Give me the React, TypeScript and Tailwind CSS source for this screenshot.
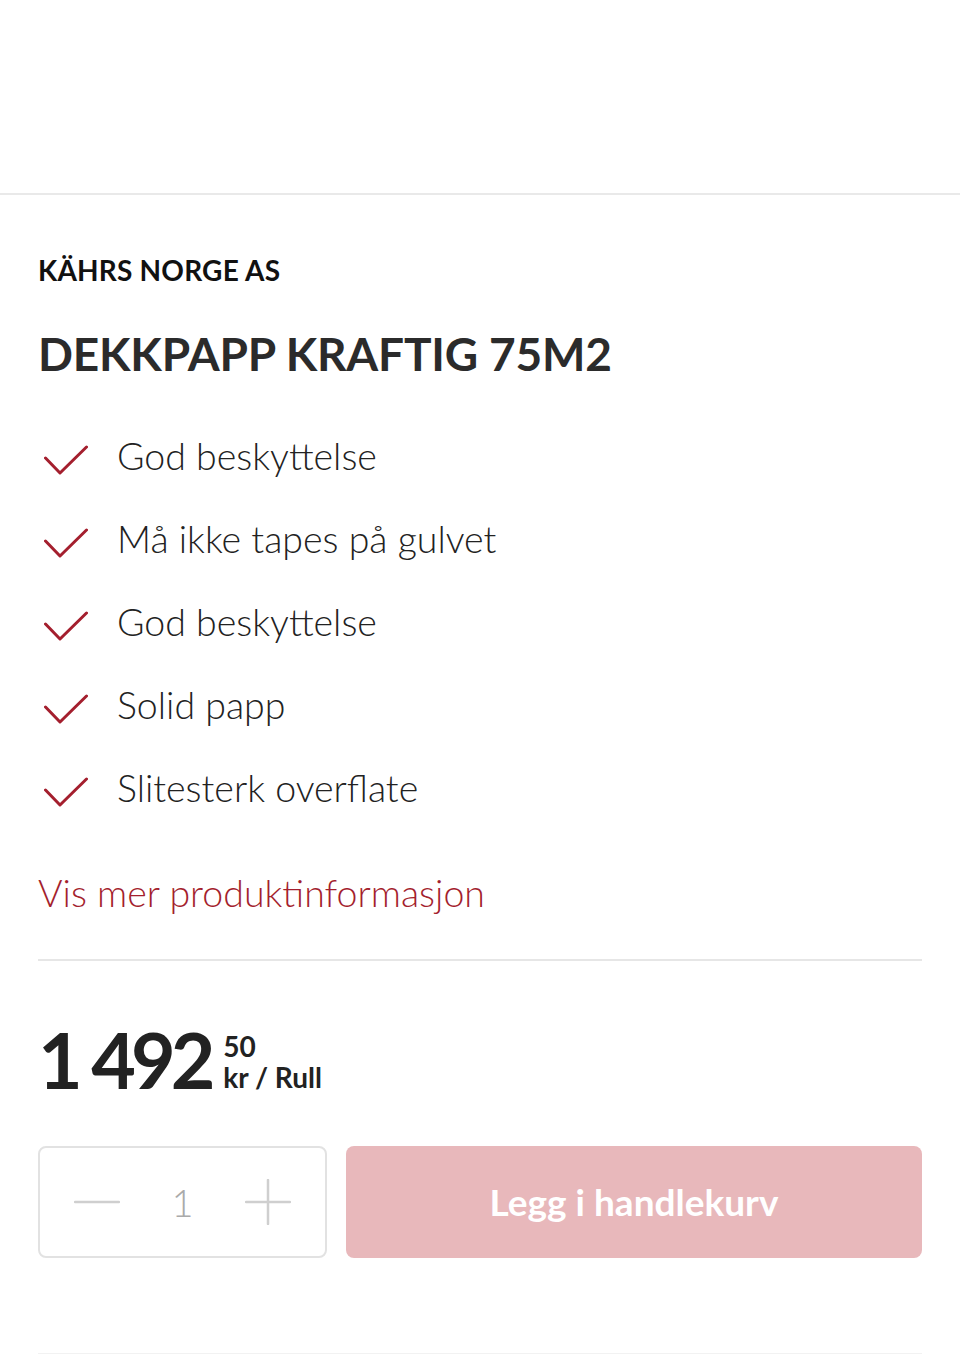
const features = [
  'God beskyttelse',
  'Må ikke tapes på gulvet',
  'God beskyttelse',
  'Solid papp',
  'Slitesterk overflate',
];

function Check() {
  return (
    <svg width="44" height="30" viewBox="0 0 44 30" fill="none" className="mt-[31px] shrink-0">
      <path d="M1.5 13 L16 28 L42.5 2" stroke="#a41f2e" strokeWidth="3" strokeLinecap="round" strokeLinejoin="round" />
    </svg>
  );
}

function Stepper({ plus }: { plus?: boolean }) {
  return (
    <svg width="46" height="46" viewBox="0 0 46 46" fill="none">
      <path d="M1 23 H45" stroke="#cfcfcf" strokeWidth="2.5" strokeLinecap="round" />
      {plus && <path d="M23 1 V45" stroke="#cfcfcf" strokeWidth="2.5" strokeLinecap="round" />}
    </svg>
  );
}

export default function App() {
  return (
    <div className="w-[960px] min-h-[1355px] bg-white font-['Lato',sans-serif] text-[#222]">
      <div className="h-[195px] border-b-2 border-[#e9e9e9]" />

      <div className="px-[38px]">
        <p className="pt-[58px] text-[28px] leading-[34px] font-bold text-[#111] tracking-[0.2px]">KÄHRS NORGE AS</p>

        <h1 className="mt-[39px] text-[46px] leading-[56px] font-bold text-[#2b2b2b] tracking-[-0.2px]">
          DEKKPAPP KRAFTIG 75M2
        </h1>

        <ul className="mt-[32px]">
          {features.map((f, i) => (
            <li key={i} className="flex items-start h-[83px] pl-[6px] gap-[29px]">
              <Check />
              <span className="text-[37.5px] leading-[83px] font-light">{f}</span>
            </li>
          ))}
        </ul>

        <a className="block mt-[42px] text-[37.5px] leading-[44px] font-light text-[#a41f2e]">
          Vis mer produktinformasjon
        </a>

        <div className="mt-[44px] border-t-2 border-[#e6e6e6]" />

        <div className="mt-[60px] flex items-end gap-[13px]">
          <span className="text-[77px] leading-[76px] font-bold text-[#222] tracking-[-5px]">1 492</span>
          <div className="flex flex-col mb-[6px] font-bold text-[#222]">
            <span className="text-[28px] leading-[34px]">50</span>
            <span className="text-[28px] leading-[28px]">kr / Rull</span>
          </div>
        </div>

        <div className="mt-[49px] flex gap-[19px]">
          <div className="w-[289px] h-[112px] border-2 border-[#e2e2e2] rounded-lg flex items-center justify-between px-[34px]">
            <Stepper />
            <span className="text-[38px] font-light text-[#aaa]">1</span>
            <Stepper plus />
          </div>
          <button className="flex-1 h-[112px] rounded-lg bg-[#e8b8bb] text-white text-[37px] font-bold">
            Legg i handlekurv
          </button>
        </div>

        <div className="mt-[95px] border-t border-[#f2f2f2]" />
      </div>
    </div>
  );
}
